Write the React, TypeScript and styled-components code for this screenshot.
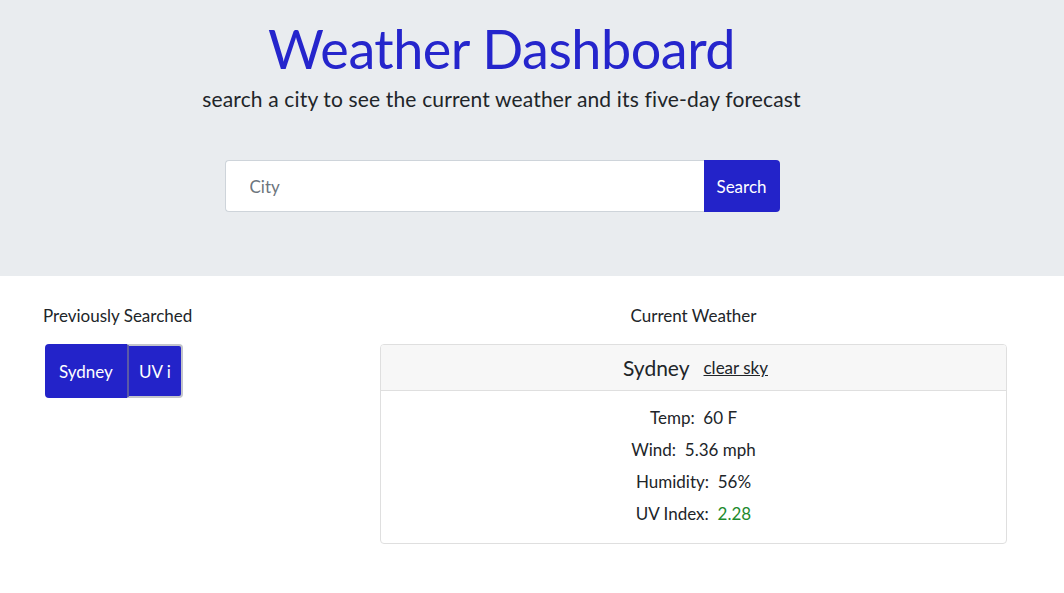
import React from "react";
import styled, { createGlobalStyle } from "styled-components";

const Global = createGlobalStyle`
  html, body { margin: 0; padding: 0; background: #fff; }
  body { font-family: Lato, "Open Sans", sans-serif; color: #212529; }
  * { box-sizing: border-box; }
`;

const Hero = styled.header`
  background: #e9ecef;
  height: 276px;
  display: flex;
  flex-direction: column;
  align-items: center;
  padding: 17px 61px 0 0;
`;

const Title = styled.h1`
  margin: 0;
  font-size: 54px;
  font-weight: 400;
  line-height: 64px;
  color: #2525cc;
  letter-spacing: -0.5px;
`;

const Lead = styled.p`
  margin: 3px 0 0;
  font-size: 21px;
  line-height: 30px;
  letter-spacing: 0.15px;
  color: #212529;
`;

const SearchForm = styled.form`
  display: flex;
  margin-top: 46px;
  margin-left: 1px;
`;

const CityInput = styled.input`
  width: 479px;
  height: 52px;
  border: 1px solid #ced4da;
  border-right: none;
  border-radius: 4px 0 0 4px;
  padding: 0 24px;
  font-family: inherit;
  font-size: 17px;
  color: #495057;
  background: #fff;
  outline: none;
  &::placeholder { color: #6c757d; }
`;

const Button = styled.button<{ $focus?: boolean; $round?: string }>`
  background: #2323c9;
  color: #fff;
  border: ${(p) => (p.$focus ? "2px solid #c3c5cb" : "none")};
  ${(p) => (p.$focus ? "border-left-color: #5a5aa6; width: 56px; padding: 0;" : "padding: 0 14px;")}
  border-radius: ${(p) => p.$round || "0"};
  font-family: inherit;
  font-size: 17px;
  height: 54px;
  cursor: pointer;
`;

const SearchButton = styled(Button)`
  height: 52px;
  width: 76px;
  padding: 0;
`;

const Main = styled.main`
  display: flex;
  padding-top: 29px;
`;

const Side = styled.section`
  width: 380px;
  padding-left: 43px;
`;

const Content = styled.section`
  width: 627px;
  display: flex;
  flex-direction: column;
  align-items: center;
`;

const SectionTitle = styled.h2`
  margin: 0 0 17px;
  font-size: 17px;
  font-weight: 400;
  line-height: 22px;
`;

const ButtonGroup = styled.div`
  display: flex;
  margin-left: 2px;
`;

const Card = styled.div`
  width: 100%;
  border: 1px solid #dfdfdf;
  border-radius: 4px;
  overflow: hidden;
`;

const CardHeader = styled.div`
  background: #f7f7f7;
  border-bottom: 1px solid #dfdfdf;
  height: 46px;
  display: flex;
  align-items: center;
  justify-content: center;
  gap: 14px;
  padding-left: 4px;
`;

const CityName = styled.span`
  font-size: 21px;
`;

const Desc = styled.a`
  font-size: 17px;
  color: #212529;
  text-decoration: underline;
`;

const CardBody = styled.div`
  padding: 11px 0 13px;
  display: flex;
  flex-direction: column;
  align-items: center;
`;

const Stat = styled.p`
  margin: 0;
  font-size: 17px;
  line-height: 32px;
`;

const Good = styled.span`
  color: #1e8a2e;
`;

export default function App() {
  return (
    <>
      <Global />
      <Hero>
        <Title>Weather Dashboard</Title>
        <Lead>search a city to see the current weather and its five-day forecast</Lead>
        <SearchForm onSubmit={(e) => e.preventDefault()}>
          <CityInput placeholder="City" />
          <SearchButton $round="0 4px 4px 0">Search</SearchButton>
        </SearchForm>
      </Hero>
      <Main>
        <Side>
          <SectionTitle>Previously Searched</SectionTitle>
          <ButtonGroup>
            <Button $round="4px 0 0 4px">Sydney</Button>
            <Button $focus $round="0 4px 4px 0">UV i</Button>
          </ButtonGroup>
        </Side>
        <Content>
          <SectionTitle>Current Weather</SectionTitle>
          <Card>
            <CardHeader>
              <CityName>Sydney</CityName>
              <Desc href="#">clear sky</Desc>
            </CardHeader>
            <CardBody>
              <Stat>Temp:&nbsp; 60 F</Stat>
              <Stat>Wind:&nbsp; 5.36 mph</Stat>
              <Stat>Humidity:&nbsp; 56%</Stat>
              <Stat>
                UV Index:&nbsp; <Good>2.28</Good>
              </Stat>
            </CardBody>
          </Card>
        </Content>
      </Main>
    </>
  );
}
